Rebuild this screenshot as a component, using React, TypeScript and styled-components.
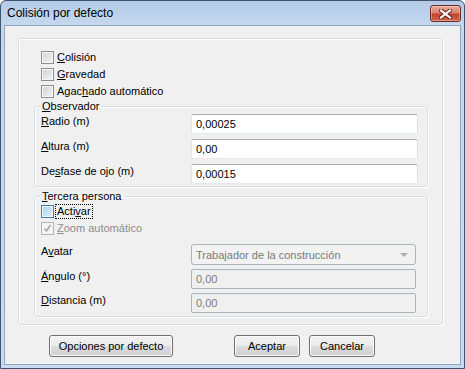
import React from 'react';
import styled, { createGlobalStyle } from 'styled-components';

const GlobalStyle = createGlobalStyle`
  html, body {
    margin: 0;
    padding: 0;
    background: #ffffff;
  }
  body {
    font-family: 'Liberation Sans', Arial, sans-serif;
    font-size: 11px;
    color: #000;
  }
`;

const Window = styled.div`
  width: 465px;
  height: 369px;
  box-sizing: border-box;
  display: flex;
  flex-direction: column;
  padding: 0 3px 3px;
  border: 1px solid #3f546e;
  border-radius: 6px 6px 0 0;
  background: linear-gradient(to bottom, #b4cbe7 0px, #c5d8ee 24px, #c9dbf0 100%);
  overflow: hidden;
`;

const TitleBar = styled.div`
  height: 24px;
  flex-shrink: 0;
  display: flex;
  align-items: center;
  padding-left: 3px;
`;

const Title = styled.span`
  flex: 1;
  font-size: 12px;
  color: #000;
`;

const CloseButton = styled.div`
  align-self: flex-start;
  margin-top: 4px;
  width: 31px;
  height: 17px;
  box-sizing: border-box;
  display: flex;
  align-items: center;
  justify-content: center;
  border: 1px solid #6b2a1f;
  border-radius: 3px;
  background: linear-gradient(to bottom, #eaaa9c 0%, #d98170 45%, #c2452e 55%, #cc6247 100%);
  box-shadow: inset 0 0 0 1px rgba(255, 255, 255, 0.35);
`;

const Client = styled.div`
  flex: 1;
  display: flex;
  flex-direction: column;
  border: 1px solid #8da6c4;
  background: #f0f0f0;
`;

const OuterGroup = styled.div`
  width: 425px;
  box-sizing: border-box;
  margin: 12px 0 0 13px;
  padding: 10px 0 7px;
  border: 1px solid #d5dfe5;
  border-radius: 3px;
  box-shadow: inset 1px 1px 0 #fff, 1px 1px 0 #fff;
`;

const CheckList = styled.div`
  display: flex;
  flex-direction: column;
  padding-left: 22px;
`;

const CheckRow = styled.div`
  height: 17px;
  display: flex;
  align-items: center;
  gap: 3px;
`;

const Box = styled.span<{ $variant?: 'normal' | 'hot' | 'disabled' }>`
  width: 13px;
  height: 13px;
  box-sizing: border-box;
  display: flex;
  align-items: center;
  justify-content: center;
  border: 1px solid
    ${p => (p.$variant === 'hot' ? '#3c7fb1' : p.$variant === 'disabled' ? '#b4b4b4' : '#8e8f8f')};
  background: ${p =>
    p.$variant === 'hot'
      ? 'linear-gradient(135deg, #a9d0ee 0%, #dff0fb 100%)'
      : p.$variant === 'disabled'
      ? '#f4f4f4'
      : 'linear-gradient(135deg, #cdd1d6 0%, #f4f4f4 100%)'};
  box-shadow: ${p => (p.$variant === 'disabled' ? 'none' : 'inset 0 0 0 1px #f7f7f7')};
`;

const CheckText = styled.span<{ $disabled?: boolean; $focused?: boolean }>`
  color: ${p => (p.$disabled ? '#8d8d8d' : '#000')};
  line-height: 13px;
  border: 1px dotted ${p => (p.$focused ? '#000' : 'transparent')};
  margin-left: -2px;
  padding: 0 1px;
`;

const Mn = styled.span`
  text-decoration: underline;
`;

const Group = styled.fieldset<{ $top: number; $bottom: number }>`
  width: 394px;
  min-width: 0;
  box-sizing: border-box;
  margin: ${p => p.$top}px 0 0 15px;
  padding: 0 9px ${p => p.$bottom}px 6px;
  border: 1px solid #d5dfe5;
  border-radius: 3px;
  box-shadow: inset 1px 1px 0 #fff, 1px 1px 0 #fff;
`;

const Legend = styled.legend`
  margin-left: -1px;
  padding: 0 2px;
  font-size: 11px;
  line-height: 12px;
`;

const Rows = styled.div<{ $top: number; $gap: number }>`
  display: flex;
  flex-direction: column;
  gap: ${p => p.$gap}px;
  padding-top: ${p => p.$top}px;
`;

const FieldRow = styled.div`
  display: flex;
  align-items: flex-start;
`;

const FieldLabel = styled.span`
  width: 150px;
  line-height: 13px;
  padding-top: 1px;
`;

const TextBox = styled.input<{ $w: number }>`
  width: ${p => p.$w}px;
  height: 20px;
  box-sizing: border-box;
  margin: 0;
  padding: 0 0 0 4px;
  font-family: 'Liberation Sans', Arial, sans-serif;
  font-size: 11px;
  color: #000;
  background: #fff;
  border: 1px solid;
  border-color: #abadb3 #dbdfe6 #e3e9ef #e2e3ea;
  border-radius: 2px;
  outline: none;

  &:disabled {
    color: #7a7a7a;
    background: #f0f0f0;
    border-color: #adb2b5;
  }
`;

const Combo = styled.div<{ $w: number }>`
  width: ${p => p.$w}px;
  height: 21px;
  box-sizing: border-box;
  display: flex;
  align-items: center;
  justify-content: space-between;
  padding: 0 7px 0 4px;
  color: #7a7a7a;
  background: #f2f2f2;
  border: 1px solid #adb2b5;
  border-radius: 3px;
`;

const Arrow = styled.span`
  width: 0;
  height: 0;
  border-left: 4px solid transparent;
  border-right: 4px solid transparent;
  border-top: 4px solid #b0b0b0;
`;

const Spacer = styled.div<{ $h: number }>`
  height: ${p => p.$h}px;
`;

const ButtonBar = styled.div`
  display: flex;
  margin-top: 10px;
  padding-left: 44px;
`;

const Button = styled.button<{ $w: number; $gap?: number }>`
  width: ${p => p.$w}px;
  height: 22px;
  margin: 0 0 0 ${p => p.$gap ?? 0}px;
  padding: 0;
  font-family: 'Liberation Sans', Arial, sans-serif;
  font-size: 11px;
  color: #000;
  border: 1px solid #707070;
  border-radius: 3px;
  background: linear-gradient(to bottom, #f2f2f2 0%, #ebebeb 50%, #dddddd 51%, #cfcfcf 100%);
  box-shadow: inset 0 0 0 1px #fcfcfc;
`;

const Check: React.FC<{
  variant?: 'normal' | 'hot' | 'disabled';
  checked?: boolean;
  focused?: boolean;
  children: React.ReactNode;
}> = ({ variant = 'normal', checked, focused, children }) => (
  <CheckRow>
    <Box $variant={variant}>
      {checked && (
        <svg width="9" height="9" viewBox="0 0 9 9">
          <polyline points="1.5,4.5 3.5,7 7.5,1" fill="none" stroke="#a8a8a8" strokeWidth="1.6" />
        </svg>
      )}
    </Box>
    <CheckText $disabled={variant === 'disabled'} $focused={focused}>
      {children}
    </CheckText>
  </CheckRow>
);

export default function App() {
  return (
    <>
      <GlobalStyle />
      <Window>
        <TitleBar>
          <Title>Colisión por defecto</Title>
          <CloseButton>
            <svg width="13" height="10" viewBox="0 0 13 10">
              <path d="M2 1.5 L11 8.5 M11 1.5 L2 8.5" stroke="#5a1d12" strokeWidth="4" strokeLinecap="square" />
              <path d="M2 1.5 L11 8.5 M11 1.5 L2 8.5" stroke="#ffffff" strokeWidth="2.2" strokeLinecap="square" />
            </svg>
          </CloseButton>
        </TitleBar>
        <Client>
          <OuterGroup>
            <CheckList>
              <Check>
                <Mn>C</Mn>olisión
              </Check>
              <Check>
                <Mn>G</Mn>ravedad
              </Check>
              <Check>
                Agac<Mn>h</Mn>ado automático
              </Check>
            </CheckList>

            <Group $top={0} $bottom={2}>
              <Legend>
                <Mn>O</Mn>bservador
              </Legend>
              <Rows $top={2} $gap={5}>
                <FieldRow>
                  <FieldLabel>
                    <Mn>R</Mn>adio (m)
                  </FieldLabel>
                  <TextBox $w={227} defaultValue="0,00025" />
                </FieldRow>
                <FieldRow>
                  <FieldLabel>
                    <Mn>A</Mn>ltura (m)
                  </FieldLabel>
                  <TextBox $w={227} defaultValue="0,00" />
                </FieldRow>
                <FieldRow>
                  <FieldLabel>
                    De<Mn>s</Mn>fase de ojo (m)
                  </FieldLabel>
                  <TextBox $w={227} defaultValue="0,00015" />
                </FieldRow>
              </Rows>
            </Group>

            <Group $top={3} $bottom={3}>
              <Legend>
                <Mn>T</Mn>ercera persona
              </Legend>
              <Spacer $h={1} />
              <Check variant="hot" focused>
                Acti<Mn>v</Mn>ar
              </Check>
              <Check variant="disabled" checked>
                <Mn>Z</Mn>oom automático
              </Check>
              <Rows $top={7} $gap={4}>
                <FieldRow>
                  <FieldLabel>
                    A<Mn>v</Mn>atar
                  </FieldLabel>
                  <Combo $w={225}>
                    Trabajador de la construcción
                    <Arrow />
                  </Combo>
                </FieldRow>
                <FieldRow>
                  <FieldLabel>
                    <Mn>Á</Mn>ngulo (°)
                  </FieldLabel>
                  <TextBox $w={225} disabled defaultValue="0,00" />
                </FieldRow>
                <FieldRow>
                  <FieldLabel>
                    <Mn>D</Mn>istancia (m)
                  </FieldLabel>
                  <TextBox $w={225} disabled defaultValue="0,00" />
                </FieldRow>
              </Rows>
            </Group>
          </OuterGroup>

          <ButtonBar>
            <Button $w={124}>Opciones por defecto</Button>
            <Button $w={66} $gap={61}>
              Aceptar
            </Button>
            <Button $w={66} $gap={9}>
              Cancelar
            </Button>
          </ButtonBar>
        </Client>
      </Window>
    </>
  );
}
